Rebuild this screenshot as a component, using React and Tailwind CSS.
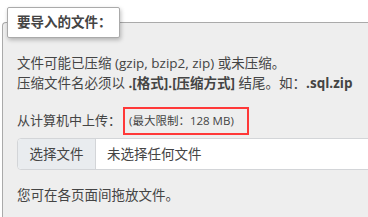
export default function App() {
  const font = { fontFamily: '"Open Sans", "Noto Sans CJK SC", sans-serif' };
  return (
    <div className="w-[368px] h-[217px] overflow-hidden bg-white pt-[7px] text-[#444]" style={font}>
      <div className="relative z-10 ml-[7px] w-[113px] h-[31px] bg-white border border-[#aaa] rounded-[2px] shadow-[1px_2px_4px_rgba(0,0,0,0.25)] pl-[9px] text-[13.5px] font-bold leading-[29px] whitespace-nowrap">
        要导入的文件：
      </div>
      <div className="-mt-[16px] ml-[2px] h-[200px] bg-[#eee] border-t border-l border-[#aaa] rounded-tl-[4px] pl-[14px] pt-[30px]">
        <div className="text-[13.5px] leading-[20px] whitespace-nowrap">
          文件可能已压缩 (gzip, bzip2, zip) 或未压缩。
        </div>
        <div className="text-[13.5px] leading-[20px] whitespace-nowrap">
          压缩文件名必须以 <b>.[格式].[压缩方式]</b> 结尾。如：<b>.sql.zip</b>
        </div>
        <div className="mt-[14px] flex items-center h-[28px] text-[13px] whitespace-nowrap">
          <span>从计算机中上传：</span>
          <span className="ml-[2px] h-[28px] w-[126px] border-2 border-[#ff3838] pl-[4px] flex items-center text-[11.5px]">
            (最大限制：128 MB)
          </span>
        </div>
        <div className="mt-[3px] flex h-[32px] w-[400px] border border-[#d3d5d8] rounded-[4px] bg-white text-[13.5px] whitespace-nowrap">
          <div className="w-[78px] bg-[#e9ecef] border-r border-[#d3d5d8] rounded-l-[4px] flex items-center justify-center">
            选择文件
          </div>
          <div className="pl-[11px] flex items-center">未选择任何文件</div>
        </div>
        <div className="mt-[15px] text-[13.5px] leading-[20px] whitespace-nowrap">
          您可在各页面间拖放文件。
        </div>
      </div>
    </div>
  );
}
